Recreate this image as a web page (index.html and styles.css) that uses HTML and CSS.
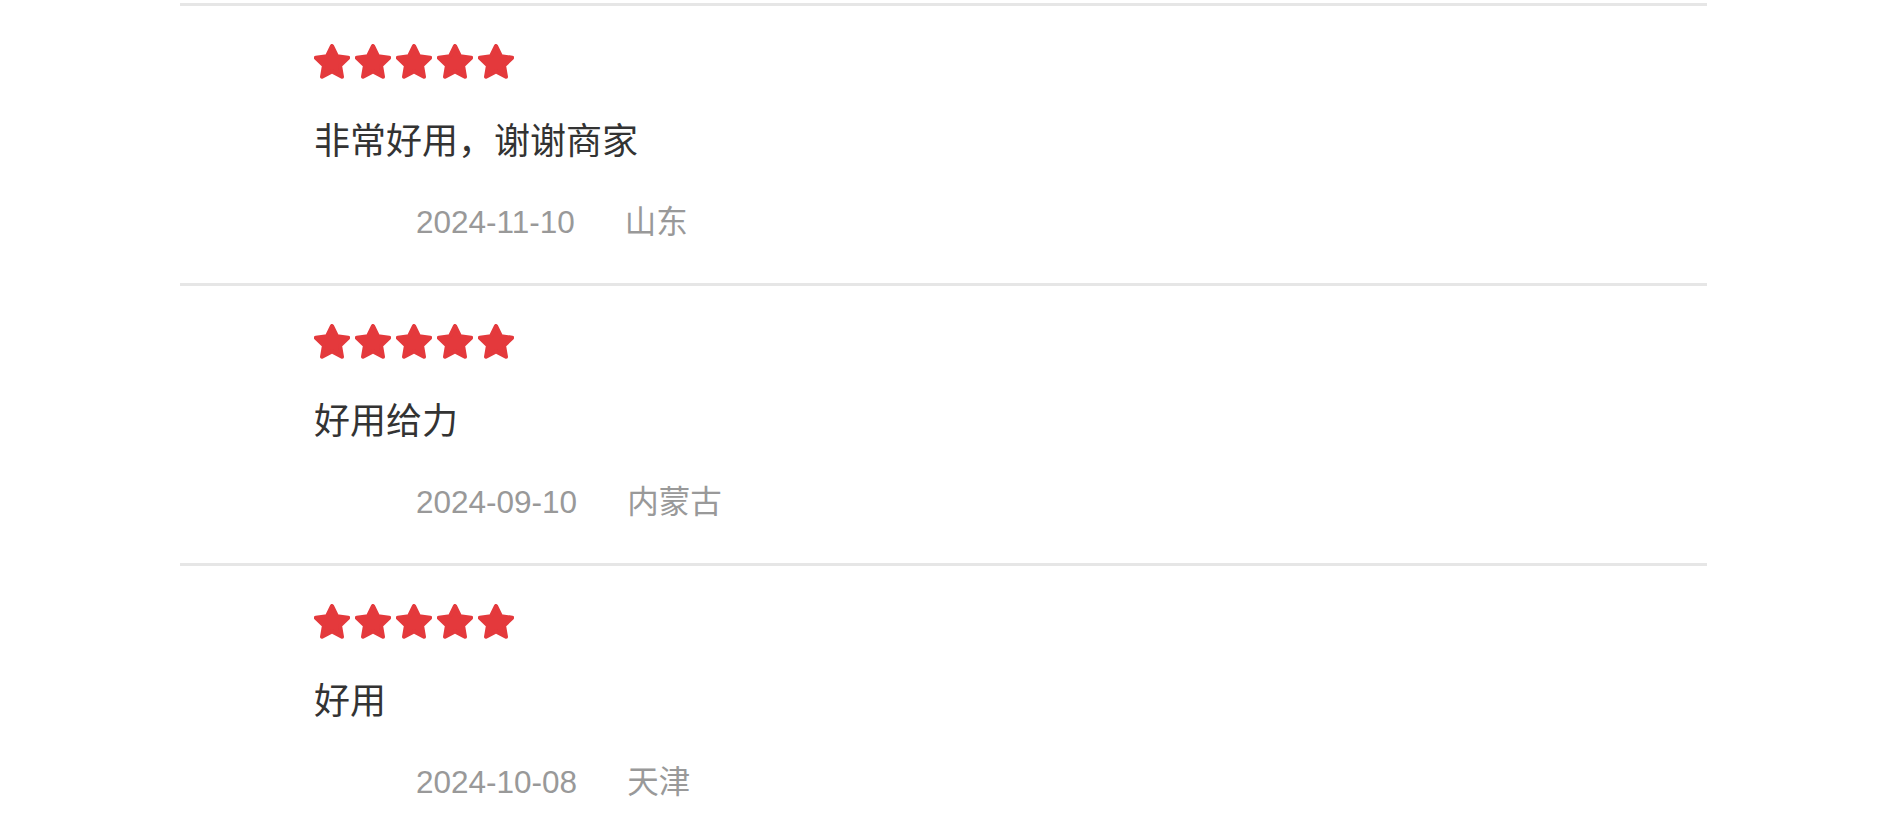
FILE: index.html
```html
<!DOCTYPE html>
<html lang="zh-CN">
<head>
<meta charset="utf-8">
<title>评价</title>
<link rel="stylesheet" href="styles.css">
</head>
<body>
<div class="reviews">
  <div class="review">
    <div class="stars">
      <svg class="star" viewBox="0 0 36 36"><polygon points="18,2 22.99,12.13 34.17,13.75 26.08,21.63 27.99,32.76 18,27.5 8.01,32.76 9.92,21.63 1.83,13.75 13.01,12.13"/></svg>
      <svg class="star" viewBox="0 0 36 36"><polygon points="18,2 22.99,12.13 34.17,13.75 26.08,21.63 27.99,32.76 18,27.5 8.01,32.76 9.92,21.63 1.83,13.75 13.01,12.13"/></svg>
      <svg class="star" viewBox="0 0 36 36"><polygon points="18,2 22.99,12.13 34.17,13.75 26.08,21.63 27.99,32.76 18,27.5 8.01,32.76 9.92,21.63 1.83,13.75 13.01,12.13"/></svg>
      <svg class="star" viewBox="0 0 36 36"><polygon points="18,2 22.99,12.13 34.17,13.75 26.08,21.63 27.99,32.76 18,27.5 8.01,32.76 9.92,21.63 1.83,13.75 13.01,12.13"/></svg>
      <svg class="star" viewBox="0 0 36 36"><polygon points="18,2 22.99,12.13 34.17,13.75 26.08,21.63 27.99,32.76 18,27.5 8.01,32.76 9.92,21.63 1.83,13.75 13.01,12.13"/></svg>
    </div>
    <p class="content">非常好用，谢谢商家</p>
    <div class="meta"><span class="date">2024-11-10</span><span class="region">山东</span></div>
  </div>
  <div class="review">
    <div class="stars">
      <svg class="star" viewBox="0 0 36 36"><polygon points="18,2 22.99,12.13 34.17,13.75 26.08,21.63 27.99,32.76 18,27.5 8.01,32.76 9.92,21.63 1.83,13.75 13.01,12.13"/></svg>
      <svg class="star" viewBox="0 0 36 36"><polygon points="18,2 22.99,12.13 34.17,13.75 26.08,21.63 27.99,32.76 18,27.5 8.01,32.76 9.92,21.63 1.83,13.75 13.01,12.13"/></svg>
      <svg class="star" viewBox="0 0 36 36"><polygon points="18,2 22.99,12.13 34.17,13.75 26.08,21.63 27.99,32.76 18,27.5 8.01,32.76 9.92,21.63 1.83,13.75 13.01,12.13"/></svg>
      <svg class="star" viewBox="0 0 36 36"><polygon points="18,2 22.99,12.13 34.17,13.75 26.08,21.63 27.99,32.76 18,27.5 8.01,32.76 9.92,21.63 1.83,13.75 13.01,12.13"/></svg>
      <svg class="star" viewBox="0 0 36 36"><polygon points="18,2 22.99,12.13 34.17,13.75 26.08,21.63 27.99,32.76 18,27.5 8.01,32.76 9.92,21.63 1.83,13.75 13.01,12.13"/></svg>
    </div>
    <p class="content">好用给力</p>
    <div class="meta"><span class="date">2024-09-10</span><span class="region">内蒙古</span></div>
  </div>
  <div class="review">
    <div class="stars">
      <svg class="star" viewBox="0 0 36 36"><polygon points="18,2 22.99,12.13 34.17,13.75 26.08,21.63 27.99,32.76 18,27.5 8.01,32.76 9.92,21.63 1.83,13.75 13.01,12.13"/></svg>
      <svg class="star" viewBox="0 0 36 36"><polygon points="18,2 22.99,12.13 34.17,13.75 26.08,21.63 27.99,32.76 18,27.5 8.01,32.76 9.92,21.63 1.83,13.75 13.01,12.13"/></svg>
      <svg class="star" viewBox="0 0 36 36"><polygon points="18,2 22.99,12.13 34.17,13.75 26.08,21.63 27.99,32.76 18,27.5 8.01,32.76 9.92,21.63 1.83,13.75 13.01,12.13"/></svg>
      <svg class="star" viewBox="0 0 36 36"><polygon points="18,2 22.99,12.13 34.17,13.75 26.08,21.63 27.99,32.76 18,27.5 8.01,32.76 9.92,21.63 1.83,13.75 13.01,12.13"/></svg>
      <svg class="star" viewBox="0 0 36 36"><polygon points="18,2 22.99,12.13 34.17,13.75 26.08,21.63 27.99,32.76 18,27.5 8.01,32.76 9.92,21.63 1.83,13.75 13.01,12.13"/></svg>
    </div>
    <p class="content">好用</p>
    <div class="meta"><span class="date">2024-10-08</span><span class="region">天津</span></div>
  </div>
</div>
</body>
</html>
```

FILE: styles.css
```css
html, body {
  margin: 0;
  padding: 0;
  background: #ffffff;
}

body {
  padding-top: 3px;
  font-family: "Noto Sans CJK SC", sans-serif;
  overflow: hidden;
}

.reviews {
  margin-left: 180px;
  width: 1527px;
  display: flex;
  flex-direction: column;
}

.review {
  border-top: 3px solid #e6e6e6;
  padding: 38px 0 41px 134px;
  display: flex;
  flex-direction: column;
}

.stars {
  display: flex;
  gap: 5px;
  height: 36px;
}

.star {
  width: 36px;
  height: 36px;
  display: block;
}

.star polygon {
  fill: #e4393c;
  stroke: #e4393c;
  stroke-width: 4;
  stroke-linejoin: round;
}

.content {
  margin: 34px 0 0;
  font-size: 36px;
  line-height: 48px;
  color: #333333;
  font-family: "Noto Sans CJK SC", sans-serif;
}

.meta {
  margin-top: 40px;
  padding-left: 102px;
  display: flex;
  gap: 50px;
  font-size: 31.5px;
  line-height: 40px;
  color: #999999;
  font-family: "Liberation Sans", "Noto Sans CJK SC", sans-serif;
}
```
